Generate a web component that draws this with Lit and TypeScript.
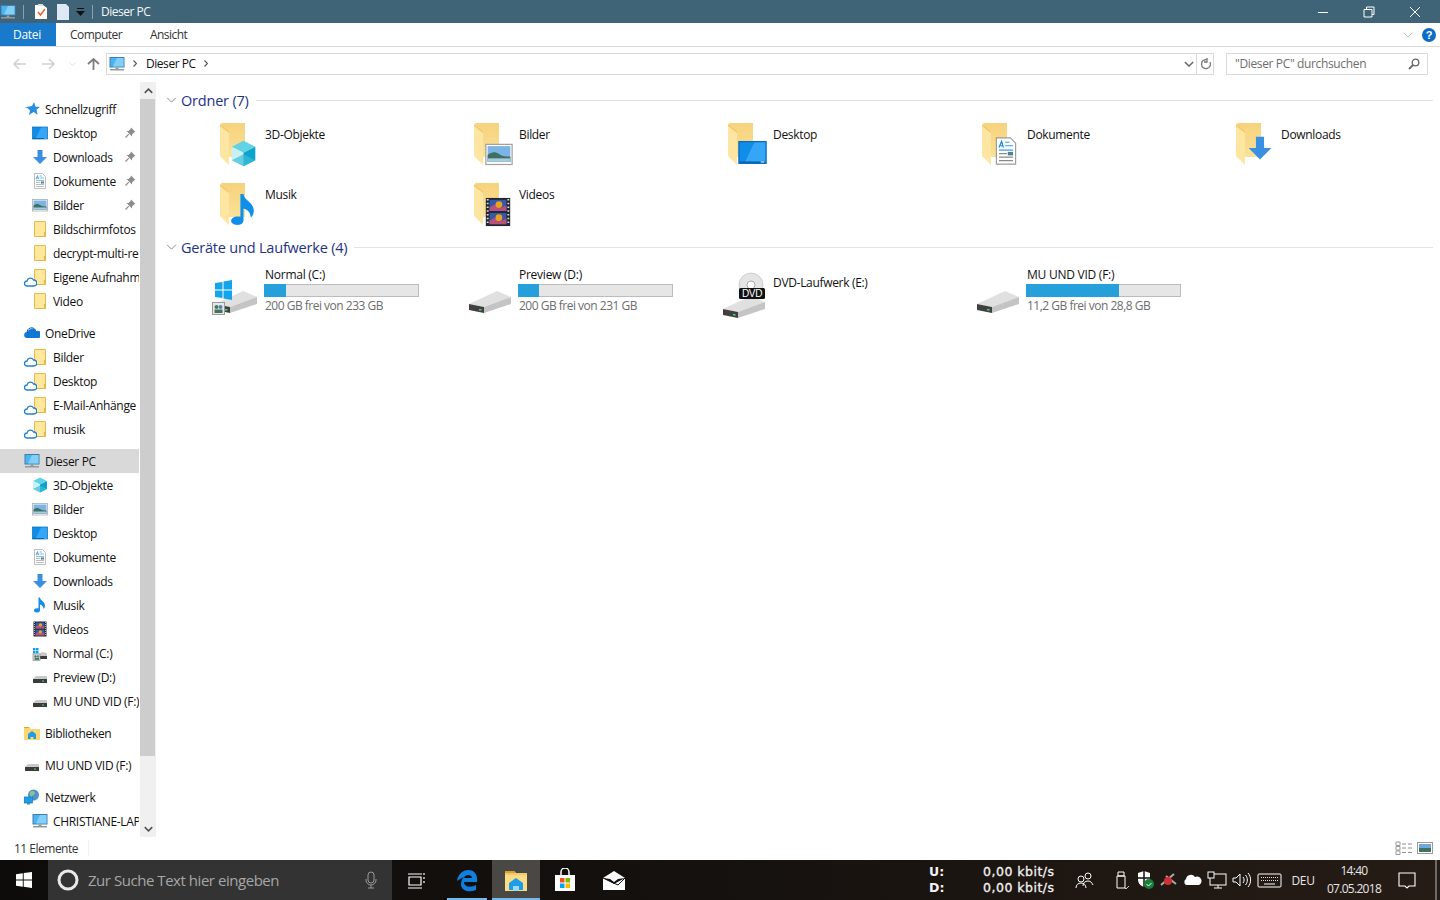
import { LitElement, html, css, svg } from "lit";
import { customElement } from "lit/decorators.js";

const frag: Record<string, any> = {
  cube: svg`<polygon points="16,1 30,8 16,15 2,8" fill="#62d3e6"/><polygon points="2,8 16,15 16,31 2,24" fill="#c9f1f5"/><polygon points="30,8 16,15 16,31 30,24" fill="#0ca3cd"/><polygon points="2,24 16,17 30,24 16,31" fill="#3bbcd8" opacity=".7"/>`,
  desktop: svg`<rect x="1" y="4" width="30" height="24" fill="#0f8de8" stroke="#0a6cbc" stroke-width="1.4"/><polygon points="18,5 30,5 30,26 8,26" fill="#34a6f5"/><rect x="2" y="26" width="28" height="1.4" fill="#0a5fa8"/><rect x="25" y="26" width="4" height="1" fill="#fff"/>`,
  arrow: svg`<path d="M11 2h10v14h9L16 30 2 16h9z" fill="#3b8fe2"/>`,
  doc: svg`<path d="M5 1h16l6 6v24H5z" fill="#fff" stroke="#9a9a9a" stroke-width="1.3"/><path d="M8 12l3-7 2 7M9 10h3" fill="none" stroke="#1789dc" stroke-width="1.4"/><path d="M15 6h5M15 10h9M8 15h16" stroke="#3b9fe0" stroke-width="1.3"/><path d="M8 19h9M8 23h16M8 27h16" stroke="#8a8a8a" stroke-width="1.2"/><rect x="18" y="17" width="6" height="4" fill="#4f7f92"/>`,
  picture: svg`<rect x="1" y="5" width="30" height="23" fill="#fff" stroke="#a0a0a0" stroke-width="1.4"/><rect x="3" y="7" width="26" height="18" fill="#7db4e6"/><path d="M3 17c5-4 9-4 13-1s8 3 13 3v6H3z" fill="#3f7064"/><rect x="3" y="21" width="26" height="4" fill="#a9cbe0"/>`,
  music: svg`<path d="M13 1h3c0 6 10 8 10 16 0 3-1 5-3 7 0-5-3-8-7-9v11c0 4-3 5-6 5-4 0-6-2-6-4 0-3 4-5 9-4z" fill="#0f8fea"/>`,
  film: svg`<rect x="3" y="1" width="26" height="30" fill="#20262e"/><rect x="7" y="3" width="18" height="12" fill="#3558a8"/><rect x="7" y="17" width="18" height="12" fill="#3558a8"/><path d="M7 11l6-3 5 4 7-3v6H7zM7 25l6-3 5 4 7-3v6H7z" fill="#b8527c"/><circle cx="17" cy="8" r="3.6" fill="#e8a21f"/><circle cx="17" cy="22" r="3.6" fill="#e8a21f"/><path d="M4 3h2M4 7h2M4 11h2M4 15h2M4 19h2M4 23h2M4 27h2M26 3h2M26 7h2M26 11h2M26 15h2M26 19h2M26 23h2M26 27h2" stroke="#ddd" stroke-width="1.5"/>`,
};

const ic = (f: any, vb = "0 0 32 32") => html`<svg class="ni" viewBox=${vb}>${f}</svg>`;
const sfolder = svg`<path d="M2.500 .5h11v15h-11z" fill="#ffe79d" stroke="#e5b94a"/><rect x="12" y="11" width="2" height="5" fill="#e5b94a"/>`;
const star = svg`<path d="M10 1l1.600 4.700 4.400.1-3.500 3 1.200 5L9.500 11 5 14l1-4.500-2.600-2.500h-3l3-1h-1l3.500-.6h-.5L8 5z" fill="#2a8ee0"/>`;
const monitor = svg`<rect x="1" y="1.500" width="14" height="9.500" fill="#4cb4f2" stroke="#3f7fa8"/><path d="M8 2h6.500v8.500H4z" fill="#82d0f8"/><rect x="6.500" y="11.500" width="3" height="1.500" fill="#9a9a9a"/><rect x="1" y="13" width="14" height="1.500" fill="#8f9aa2"/>`;
const sdrive = svg`<polygon points="1,10 4,7 15,7 15,10" fill="#c8c8c8"/><rect x="1" y="10" width="14" height="4" fill="#3c3c3c"/><rect x="10" y="11.500" width="2" height="1" fill="#4cd964"/>`;
const swin = svg`<path d="M1 3h2.500v2.500H1zM4 3h2.500v2.500H4zM1 6h2.500v2.500H1zM4 6h2.500v2.500H4z" fill="#13a0e8"/><polygon points="7,9 10,7 15,8 15,11 7,11" fill="#c8c8c8"/><rect x="8" y="11" width="7" height="3" fill="#3c3c3c"/><rect x="1" y="9" width="7" height="6.500" fill="#dfdfdf" stroke="#8c8c8c" stroke-width=".7"/><circle cx="3.500" cy="11.500" r="1.200" fill="#4a7a52"/><circle cx="6" cy="11.500" r="1.200" fill="#4a8ab0"/><rect x="2.500" y="13" width="4.500" height="1.800" fill="#45705a"/>`;
const lib = svg`<path d="M0 3h6l1 1h9v11H0z" fill="#fbd56f"/><path d="M0 2h5l1 1H0z" fill="#e0a92e"/><path d="M4 9l4-3 4 3v5H9.500v-2h-3v2H4z" fill="#1e9ce8"/>`;
const net = svg`<circle cx="9.500" cy="6" r="5.500" fill="#4c93c9"/><path d="M6 3c2-2 5-1 5 1s-3 2-3 4-3-2-2-5z" fill="#8fbf8c"/><rect x="0" y="8" width="8.500" height="6" fill="#18a0ee" stroke="#0f78b8" stroke-width=".7"/><rect x="3" y="14" width="3" height="1.500" fill="#777"/>`;
const odrive = svg`<path d="M3 13a3 3 0 0 1 .4-6 5 5 0 0 1 9-1 3.500 3.500 0 0 1 2.500 7z" fill="#0f78d4"/><path d="M3.500 8a4 4 0 0 1 8-2" fill="none" stroke="#0a5ca8" stroke-width="1"/>`;

const sm = (f: any, cls = "") => html`<svg class="ni ${cls}" viewBox="0 0 16 16">${f}</svg>`;

const nav = [
  [
    { t: "Schnellzugriff", top: 1, i: sm(star) },
    { t: "Desktop", i: ic(frag.desktop), pin: 1 },
    { t: "Downloads", i: ic(frag.arrow), pin: 1 },
    { t: "Dokumente", i: ic(frag.doc), pin: 1 },
    { t: "Bilder", i: ic(frag.picture), pin: 1 },
    { t: "Bildschirmfotos", i: sm(sfolder) },
    { t: "decrypt-multi-release", i: sm(sfolder) },
    { t: "Eigene Aufnahmen", i: sm(sfolder), cloud: 1 },
    { t: "Video", i: sm(sfolder) },
  ],
  [
    { t: "OneDrive", top: 1, i: sm(odrive) },
    { t: "Bilder", i: sm(sfolder), cloud: 1 },
    { t: "Desktop", i: sm(sfolder), cloud: 1 },
    { t: "E-Mail-Anhänge", i: sm(sfolder), cloud: 1 },
    { t: "musik", i: sm(sfolder), cloud: 1 },
  ],
  [
    { t: "Dieser PC", top: 1, sel: 1, i: sm(monitor) },
    { t: "3D-Objekte", i: ic(frag.cube) },
    { t: "Bilder", i: ic(frag.picture) },
    { t: "Desktop", i: ic(frag.desktop) },
    { t: "Dokumente", i: ic(frag.doc) },
    { t: "Downloads", i: ic(frag.arrow) },
    { t: "Musik", i: ic(frag.music) },
    { t: "Videos", i: ic(frag.film) },
    { t: "Normal (C:)", i: sm(swin) },
    { t: "Preview (D:)", i: sm(sdrive) },
    { t: "MU UND VID (F:)", i: sm(sdrive) },
  ],
  [{ t: "Bibliotheken", top: 1, i: sm(lib) }],
  [{ t: "MU UND VID (F:)", top: 1, i: sm(sdrive) }],
  [
    { t: "Netzwerk", top: 1, i: sm(net) },
    { t: "CHRISTIANE-LAPTOP", i: sm(monitor) },
  ],
];

const folders = [
  { t: "3D-Objekte", f: frag.cube, x: 18, y: 21, s: 27 },
  { t: "Bilder", f: frag.picture, x: 19, y: 21, s: 28 },
  { t: "Desktop", f: frag.desktop, x: 18, y: 19, s: 29 },
  { t: "Dokumente", f: frag.doc, x: 18, y: 18, s: 28 },
  { t: "Downloads", f: frag.arrow, x: 19, y: 16, s: 26 },
  { t: "Musik", f: frag.music, x: 15, y: 14, s: 33 },
  { t: "Videos", f: frag.film, x: 17, y: 18, s: 30 },
];

const bigFolder = (o: any) => html`<svg class="big" viewBox="0 0 48 48">
  <defs><linearGradient id="fb" x1="0" x2="0" y1="0" y2="1"><stop offset="0" stop-color="#f6d27c"/><stop offset="1" stop-color="#fbe198"/></linearGradient></defs>
  <polygon points="9,4 33,4 33,38 17,38" fill="url(#fb)"/>
  <polygon points="8,5 17,12 17,46 8,37" fill="#fde5a2"/>
  <polygon points="8,5 17,12 17,14 8,7" fill="#f3c868"/>
  <svg x=${o.x} y=${o.y} width=${o.s} height=${o.s} viewBox="0 0 32 32">${o.f}</svg>
</svg>`;

const driveBody = svg`
  <polygon points="3,34 31,21 45,27 18,37" fill="#e0e0e0"/>
  <polygon points="18,37 45,27 45,34 18,43" fill="#c4c4c4"/>
  <polygon points="3,34 18,37 18,43 3,40" fill="#404040"/>
  <rect x="13" y="39" width="2.500" height="1.500" fill="#4cd964"/>`;

const drives = [
  { t: "Normal (C:)", pct: 22 / 155, sub: "200 GB frei von 233 GB", win: 1 },
  { t: "Preview (D:)", pct: 21 / 155, sub: "200 GB frei von 231 GB" },
  { t: "DVD-Laufwerk (E:)", dvd: 1 },
  { t: "MU UND VID (F:)", pct: 94 / 155, sub: "11,2 GB frei von 28,8 GB" },
];

const driveIcon = (d: any) => {
  if (d.dvd)
    return html`<svg class="big" viewBox="0 0 48 48">
      <g transform="translate(0,5)">${driveBody}</g>
      <circle cx="31" cy="15" r="12" fill="#e4e4e4" stroke="#b8b8b8" stroke-width=".6"/>
      <circle cx="31" cy="15" r="4" fill="#fff" stroke="#aaa"/>
      <rect x="19" y="18" width="26" height="11" rx="1.500" fill="#111"/>
      <text x="32" y="27" text-anchor="middle" class="dvdt">DVD</text>
    </svg>`;
  return html`<svg class="big" viewBox="0 0 48 48">
    ${driveBody}
    ${d.win
      ? svg`<path d="M3 13l7.500-1v7.500H3zM11.500 11.500 20 10v9.500h-8.500zM3 20.500h7.500V28L3 27zM11.500 20.500H20V30l-8.500-1.500z" fill="#13a5ea"/>
        <rect x="0.500" y="32.500" width="12" height="12" fill="#e8e8e8" stroke="#9a9a9a"/>
        <circle cx="4.500" cy="37" r="2" fill="#4a7a52"/><circle cx="8.500" cy="37" r="2" fill="#4a8ab0"/><rect x="2.500" y="39.500" width="8" height="3.500" fill="#45705a"/>`
      : ""}
  </svg>`;
};

const chev = (cls: string) => html`<svg class=${cls} viewBox="0 0 12 7"><path d="M1 1l5 5 5-5" fill="none" stroke="currentColor" stroke-width="1"/></svg>`;

@customElement("app-root")
export class AppRoot extends LitElement {
  static styles = css`
    :host { display: flex; flex-direction: column; width: 1440px; height: 900px; overflow: hidden; background: #fff;
      font-family: "Open Sans", "Noto Sans", sans-serif; font-size: 12px; color: #111; letter-spacing: -0.32px; }
    svg { display: block; flex: none; }

    .title { height: 23px; background: #3f6478; display: flex; align-items: center; color: #fff; flex: none; }
    .t-pc { width: 16px; height: 16px; margin-right: 7px; }
    .t-sep { width: 1px; height: 14px; background: #8ba2ae; }
    .t-doc { width: 14px; height: 16px; margin-left: 10px; }
    .t-page { width: 14px; height: 16px; margin-left: 8px; }
    .t-drop { width: 9px; height: 8px; margin: 0 7px 0 6px; }
    .t-name { margin-left: 8px; color: #f4f7f8; letter-spacing: -0.5px; }
    .wins { margin-left: auto; margin-right: 2px; display: flex; }
    .wbtn { width: 46px; height: 21px; display: flex; align-items: center; justify-content: center; }
    .wbtn svg { width: 12px; height: 12px; }

    .tabs { height: 23px; border-bottom: 1px solid #dadbdc; display: flex; align-items: center; flex: none; color: #333; }
    .datei { width: 56px; height: 23px; background: #1979ca; color: #fff; display: flex; align-items: center; justify-content: center; padding-right: 2px; box-sizing: border-box; }
    .tab { margin-left: 14px; width: 66px; letter-spacing: -0.55px; }
    .tabs-r { margin-left: auto; display: flex; align-items: center; margin-right: 4px; }
    .rib-ch { width: 10px; height: 6px; color: #aaa; margin-right: 9px; }
    .help { width: 14px; height: 14px; border-radius: 50%; background: #0f6cc4; color: #fff; font: bold 11px "Liberation Sans", sans-serif; display: flex; align-items: center; justify-content: center; letter-spacing: 0; }

    .addr { height: 34px; display: flex; align-items: center; flex: none; position: relative; }
    .nb { width: 13px; height: 12px; color: #cfcfcf; }
    .nb.b { margin-left: 13px; }
    .nb.f { margin-left: 16px; }
    .nb-d { width: 7px; height: 4px; color: #c8c8c8; margin-left: 14px; }
    .nb.u { margin-left: 11px; color: #7d7d7d; }
    .abox { margin-left: 6px; width: 1108px; height: 22px; border: 1px solid #d9d9d9; box-sizing: border-box; display: flex; align-items: center; color: #111; white-space: nowrap; padding-bottom: 1px; }
    .a-pc { width: 16px; height: 16px; margin-left: 2px; }
    .a-sep { width: 4px; height: 7px; color: #555; margin-left: 8px; }
    .a-name { margin-left: 9px; width: 50px; letter-spacing: -0.45px; }
    .a-chev { width: 10px; height: 6px; color: #666; margin-left: auto; margin-right: 2px; }
    .a-div { width: 1px; height: 20px; background: #d9d9d9; margin: 1px 3px 0 0; }
    .a-ref { width: 12px; height: 12px; color: #777; margin-right: 1px; }
    .sbox { margin-left: 12px; width: 202px; height: 22px; border: 1px solid #d9d9d9; box-sizing: border-box; display: flex; align-items: center; padding: 0 7px 1px 8px; color: #6d6d6d; letter-spacing: -0.36px; white-space: nowrap; }
    .sbox svg { width: 12px; height: 12px; margin-left: auto; color: #666; }

    .body { flex: 1; display: flex; min-height: 0; }
    .nav { width: 139px; margin-right: 1px; flex: none; overflow: hidden; padding-top: 16px; box-sizing: border-box; white-space: nowrap; }
    .grp { margin-bottom: 8px; }
    .row { height: 24px; display: flex; align-items: center; padding-left: 32px; position: relative; gap: 5px; }
    .row.top { padding-left: 24px; }
    .row.sel { background: #d9d9d9; }
    .ni { width: 16px; height: 16px; }
    .pin { position: absolute; left: 125px; top: 6px; width: 11px; height: 11px; }
    .cloud { position: absolute; left: 24px; top: 12px; width: 13px; height: 10px; }
    .sb { width: 16px; flex: none; background: #f0f0f0; display: flex; flex-direction: column; margin: 1px 1px 1px 0; }
    .sb-btn { height: 17px; display: flex; align-items: center; justify-content: center; color: #505050; flex: none; }
    .sb-btn svg { width: 9px; height: 6px; }
    .sb-th { height: 657px; background: #cdcdcd; width: 15px; flex: none; }
    .sb-sp { flex: 1; }

    .content { flex: 1; padding: 9px 7px 0 9px; min-width: 0; }
    .gh { height: 20px; display: flex; align-items: center; color: #1e3287; font-size: 14.500px; letter-spacing: -0.2px; }
    .gh .gc { width: 11px; height: 6px; color: #777; margin-right: 4px; }
    .gh i { flex: 1; height: 1px; background: #e3e3e3; margin-left: 7px; }
    .tiles { display: grid; grid-template-columns: repeat(5, 254px); padding-left: 46px; }
    .tiles.f { grid-auto-rows: 60px; padding-top: 5px; padding-bottom: 2px; }
    .tile { display: flex; align-items: flex-start; }
    .big { width: 48px; height: 48px; }
    .tiles.f .big { margin-top: 4px; }
    .tiles.f .name { margin: 12px 0 0 5px; line-height: 16px; }
    .tiles.d { padding-top: 10px; }
    .tiles.d .big { margin-top: 3px; }
    .dinfo { margin-left: 4px; width: 155px; }
    .dinfo .n { line-height: 16px; padding-left: 1px; letter-spacing: -0.25px; }
    .bar { height: 13px; box-sizing: border-box; border: 1px solid #bcbcbc; background: #e6e6e6; margin-top: 1px; }
    .bar div { background: #26a0da; margin: -1px 0 0 -1px; height: 13px; }
    .dinfo .s { line-height: 16px; color: #6d6d6d; padding-left: 1px; margin-top: 1px; letter-spacing: -0.5px; }
    .dvdn { margin: 8px 0 0 5px; line-height: 16px; }
    .dvdt { font: 10px "Liberation Sans", sans-serif; fill: #fff; }

    .status { height: 22px; flex: none; display: flex; align-items: center; padding: 0 0 2px 14px; box-sizing: border-box; color: #333; letter-spacing: -0.5px; }
    .st-sep { width: 1px; height: 16px; background: #f0f0f0; margin-left: 10px; }
    .st-r { margin-left: auto; display: flex; gap: 5px; margin-right: 6px; align-items: center; }
    .st-r svg { width: 17px; height: 14px; }

    .task { height: 40px; flex: none; display: flex; align-items: stretch; background: linear-gradient(90deg, #0d0c0a, #15110e 50%, #261c16); color: #fff; letter-spacing: 0; }
    .tb { width: 48px; display: flex; align-items: center; justify-content: center; flex: none; position: relative; }
    .tb svg { width: 24px; height: 24px; }
    .tb.start svg { width: 16px; height: 16px; }
    .tb.view svg { margin-right: 2px; }
    .tsearch { width: 344px; background: #333333; display: flex; align-items: center; flex: none; color: #a6a6a6; font-size: 15px; letter-spacing: -0.46px; }
    .tsearch .cort { width: 22px; height: 22px; margin: 0 9px; }
    .tsearch .mic { width: 14px; height: 18px; margin-left: auto; margin-right: 14px; }
    .g3 { width: 3px; flex: none; }
    .g1 { width: 1px; flex: none; }
    .tb.edge::after { content: ""; position: absolute; left: 4px; right: 4px; bottom: 0; height: 2px; background: #76b9ed; }
    .tb.on { background: #4a4844; }
    .tb.on::after { content: ""; position: absolute; left: 0; right: 0; bottom: 0; height: 2px; background: #76b9ed; }
    .net { margin-left: auto; display: grid; grid-template-columns: 54px 89px; font: bold 12.500px/16px "DejaVu Sans", sans-serif; align-content: center; color: #f2f2f2; }
    .net span { font-weight: normal; -webkit-text-stroke: 0.3px #f2f2f2; letter-spacing: 0.5px; }
    .tray { display: flex; align-items: center; }
    .tgap { width: 10px; flex: none; }
    .ti { flex: none; display: flex; justify-content: center; align-items: center; }
    .deu { width: 34px; text-align: center; color: #e6e6e6; font-size: 12px; letter-spacing: -0.3px; }
    .clock { width: 68px; text-align: center; line-height: 18px; color: #e6e6e6; letter-spacing: -0.7px; font-size: 12px; padding-bottom: 1px; }
    .sd { width: 2px; margin: 0 3px 0 9px; background: #6a6a6a; flex: none; height: 40px; }
  `;

  private tray(w: number, body: any, h = 20, vw = 20) {
    return html`<div class="ti" style="width:${w}px"><svg width=${vw} height=${h} viewBox="0 0 ${vw} ${h}">${body}</svg></div>`;
  }

  render() {
    const pin = svg`<polygon points="6,.5 10.500,5 9,5.500 7,7.500 7,9.500 1.500,4 3.500,4 5.500,2" fill="#8c8c8c"/><path d="M3.800 7.200L.5 10.500" stroke="#8c8c8c" stroke-width="1.200"/>`;
    return html`
      <div class="title">
        <svg class="t-pc" viewBox="0 0 16 16">${monitor}</svg>
        <div class="t-sep"></div>
        <svg class="t-doc" viewBox="0 0 14 16"><path d="M1 1h8l4 3v11H1z" fill="#fff"/><path d="M4 8l2.500 3L11 5" fill="none" stroke="#e8622a" stroke-width="1.500"/><rect x="4" y="0" width="5" height="2" fill="#ddd"/></svg>
        <svg class="t-page" viewBox="0 0 14 16"><path d="M1 0h9l3 3v13H1z" fill="#dfe8f5"/></svg>
        <svg class="t-drop" viewBox="0 0 9 8"><rect x="1" y="0" width="7" height="1" fill="#111"/><path d="M0 3h9L4.500 8z" fill="#111"/></svg>
        <div class="t-sep"></div>
        <div class="t-name">Dieser PC</div>
        <div class="wins">
          <div class="wbtn"><svg viewBox="0 0 12 12"><path d="M1 6.500h10" stroke="#fff"/></svg></div>
          <div class="wbtn"><svg viewBox="0 0 12 12"><path d="M3.500 3V1h7.500v7.500H9M1 3.500h8v7.500H1z" fill="none" stroke="#fff"/></svg></div>
          <div class="wbtn"><svg viewBox="0 0 12 12"><path d="M1 1l10 10M11 1L1 11" stroke="#fff"/></svg></div>
        </div>
      </div>
      <div class="tabs">
        <div class="datei">Datei</div>
        <div class="tab">Computer</div>
        <div class="tab">Ansicht</div>
        <div class="tabs-r">${chev("rib-ch")}<div class="help">?</div></div>
      </div>
      <div class="addr">
        <svg class="nb b" viewBox="0 0 13 12"><path d="M6 1L1 6l5 5M1 6h12" fill="none" stroke="currentColor" stroke-width="1.500"/></svg>
        <svg class="nb f" viewBox="0 0 13 12"><path d="M7 1l5 5-5 5M12 6H0" fill="none" stroke="currentColor" stroke-width="1.500"/></svg>
        ${chev("nb-d")}
        <svg class="nb u" viewBox="0 0 13 12"><path d="M1 6l5.500-5L12 6M6.500 1v11" fill="none" stroke="currentColor" stroke-width="1.800"/></svg>
        <div class="abox">
          <svg class="a-pc" viewBox="0 0 16 16">${monitor}</svg>
          <svg class="a-sep" viewBox="0 0 4 7"><path d="M.5.500l3 3-3 3" fill="none" stroke="currentColor" stroke-width="1.200"/></svg>
          <div class="a-name">Dieser PC</div>
          <svg class="a-sep" viewBox="0 0 4 7"><path d="M.5.500l3 3-3 3" fill="none" stroke="currentColor" stroke-width="1.200"/></svg>
          <svg class="a-chev" viewBox="0 0 12 7"><path d="M1 1l5 5 5-5" fill="none" stroke="currentColor" stroke-width="1.700"/></svg>
          <div class="a-div"></div>
          <svg class="a-ref" viewBox="0 0 12 12"><path d="M10 4a4.500 4.500 0 1 1-3-2.300M7 0v4h-3" fill="none" stroke="currentColor" stroke-width="1.300"/></svg>
        </div>
        <div class="sbox">"Dieser PC" durchsuchen
          <svg viewBox="0 0 12 12"><circle cx="7.500" cy="4.500" r="3.300" fill="none" stroke="currentColor" stroke-width="1.300"/><path d="M5 7l-4 4" stroke="currentColor" stroke-width="1.800"/></svg>
        </div>
      </div>

      <div class="body">
        <div class="nav">
          ${nav.map(g => html`<div class="grp">
            ${g.map((r: any) => html`<div class="row ${r.top ? "top" : ""} ${r.sel ? "sel" : ""}">
              ${r.i}<span>${r.t}</span>
              ${r.pin ? html`<svg class="pin" viewBox="0 0 11 11">${pin}</svg>` : ""}
              ${r.cloud ? html`<svg class="cloud" viewBox="0 0 13 10"><path d="M3 9a2.500 2.500 0 0 1 0-5 3.500 3.500 0 0 1 6.500-1A3 3 0 0 1 10 9z" fill="#fff" stroke="#1f7fd6" stroke-width="1.300"/></svg>` : ""}
            </div>`)}
          </div>`)}
        </div>
        <div class="sb">
          <div class="sb-btn"><svg viewBox="0 0 12 7"><path d="M1 6l5-5 5 5" fill="none" stroke="currentColor" stroke-width="2"/></svg></div>
          <div class="sb-th"></div>
          <div class="sb-sp"></div>
          <div class="sb-btn"><svg viewBox="0 0 12 7"><path d="M1 1l5 5 5-5" fill="none" stroke="currentColor" stroke-width="2"/></svg></div>
        </div>
        <div class="content">
          <div class="gh">${chev("gc")}<span>Ordner (7)</span><i></i></div>
          <div class="tiles f">
            ${folders.map(o => html`<div class="tile">${bigFolder(o)}<div class="name">${o.t}</div></div>`)}
          </div>
          <div class="gh">${chev("gc")}<span>Geräte und Laufwerke (4)</span><i></i></div>
          <div class="tiles d">
            ${drives.map((d: any) => html`<div class="tile">${driveIcon(d)}
              ${d.dvd
                ? html`<div class="dvdn">${d.t}</div>`
                : html`<div class="dinfo"><div class="n">${d.t}</div>
                    <div class="bar"><div style="width:${(d.pct * 100).toFixed(1)}%"></div></div>
                    <div class="s">${d.sub}</div></div>`}
            </div>`)}
          </div>
        </div>
      </div>

      <div class="status">
        <span>11 Elemente</span><div class="st-sep"></div>
        <div class="st-r">
          <svg viewBox="0 0 17 14"><path d="M1 1h4v3.500H1zM1 5.500h4V9H1zM1 10h4v3.500H1z" fill="none" stroke="#9a9a9a"/><path d="M7 3h4M13 3h4M7 7h4M13 7h4M7 11.500h4M13 11.500h4" stroke="#8f8f8f"/></svg>
          <svg viewBox="0 0 17 14"><rect x=".5" y="1.500" width="15" height="11" fill="#fff" stroke="#9a9a9a"/><rect x="2" y="3" width="12" height="8" fill="#6fa8dc"/><rect x="2" y="7" width="12" height="4" fill="#41705f"/></svg>
        </div>
      </div>

      <div class="task">
        <div class="tb start"><svg viewBox="0 0 16 16"><path d="M0 2.300l6.800-1v6.200H0zM7.700 1.100 16 0v7.500H7.700zM0 8.500h6.800v6.200l-6.800-1zM7.700 8.500H16V16l-8.300-1.200z" fill="#fff"/></svg></div>
        <div class="tsearch">
          <svg class="cort" viewBox="0 0 22 22"><circle cx="11" cy="11" r="9" fill="none" stroke="#e8e8e8" stroke-width="3"/></svg>
          <span>Zur Suche Text hier eingeben</span>
          <svg class="mic" viewBox="0 0 14 18"><rect x="4" y="1" width="6" height="11" rx="3" fill="none" stroke="#9a9a9a"/><path d="M2 8v1a5 5 0 0 0 10 0V8M7 14v3M4 17h6" fill="none" stroke="#9a9a9a"/></svg>
        </div>
        <div class="tb view"><svg viewBox="0 0 24 24"><path d="M5 6h14M5 20h14M6 9h12v8H6z" fill="none" stroke="#fff" stroke-width="1.200"/><path d="M21 5v2M21 9v2M21 13v2" stroke="#fff" stroke-width="1.200"/></svg></div>
        <div class="g3"></div>
        <div class="tb edge"><svg viewBox="0 0 24 24"><path d="M2 13C3 6 8 2 13 2c6 0 10 4 9 12H9c0 5 7 6 12 3v5c-7 3-15 1-15-6 0-3 1-5 3-7-3 1-5 3-7 4zM9 10h8c0-4-7-4-8 0z" fill="#0f7fe0"/></svg></div>
        <div class="g1"></div>
        <div class="tb on"><svg viewBox="0 0 24 24"><path d="M1 3h9l2 2h11v18H1z" fill="#fbdc85"/><path d="M1 3h9l2 2H1z" fill="#d8a22c"/><path d="M1 6h22" stroke="#e8b84a"/><path d="M5 22v-7l7-5 7 5v7h-4v-4H9v4z" fill="#1e9ce8"/><path d="M9 18h6v5H9z" fill="#9adcf5"/></svg></div>
        <div class="g1"></div>
        <div class="tb"><svg viewBox="0 0 24 24"><path d="M2 7h20v16H2z" fill="#fff"/><path d="M8 7V4a4 4 0 0 1 8 0v3" fill="none" stroke="#fff" stroke-width="1.500"/><rect x="7" y="10" width="4.500" height="4.500" fill="#f25022"/><rect x="12.500" y="10" width="4.500" height="4.500" fill="#7fba00"/><rect x="7" y="15.500" width="4.500" height="4.500" fill="#00a4ef"/><rect x="12.500" y="15.500" width="4.500" height="4.500" fill="#ffb900"/></svg></div>
        <div class="g1"></div>
        <div class="tb"><svg viewBox="0 0 24 24"><path d="M1 10L12 3l11 7v12H1z" fill="#fff"/><path d="M1 10l11 6 11-6-7 1-4 3-4-3z" fill="#111"/><path d="M1 10l15 7 7-7" fill="none" stroke="#111"/></svg></div>

        <div class="net">
          <div>U:</div><span>0,00 kbit/s</span>
          <div>D:</div><span>0,00 kbit/s</span>
        </div>
        <div class="tray">
          ${this.tray(26, svg`<circle cx="13" cy="6" r="3" fill="none" stroke="#fff"/><path d="M8 16c0-3 2-5 5-5s4 2 5 4" fill="none" stroke="#fff"/><circle cx="6" cy="9" r="3" fill="none" stroke="#fff"/><path d="M1 18c0-3 2-5 5-5s5 2 5 5" fill="none" stroke="#fff"/>`)}
          <div class="tgap"></div>
          ${this.tray(26, svg`<path d="M6 6h8v12H6zM7 2h6v4H7z" fill="none" stroke="#fff"/><path d="M13 17l2 2 3-3" fill="none" stroke="#ccc"/>`)}
          ${this.tray(22, svg`<path d="M3 3l6-2 6 2v6c0 5-3 7-6 8-3-1-6-3-6-8z" fill="#fff"/><path d="M9 1v16M3 8h12" stroke="#15110e" stroke-width="1.500"/><circle cx="14" cy="14" r="5" fill="#188038"/><path d="M11.500 14l2 2 3-3" fill="none" stroke="#fff"/>`)}
          ${this.tray(24, svg`<path d="M3 15L16 4M8 6l10 8" stroke="#aaa" stroke-width="2"/><circle cx="10" cy="11" r="4" fill="#d03030"/>`)}
          ${this.tray(24, svg`<path d="M4 15a3.500 3.500 0 0 1 0-6 5 5 0 0 1 9-2 4 4 0 0 1 4 8z" fill="#fff"/>`)}
          ${this.tray(25, svg`<rect x="3" y="4" width="16" height="11" fill="none" stroke="#fff"/><rect x="1" y="2" width="6" height="6" fill="#15110e" stroke="#fff"/><path d="M11 15v3M7 18h8" stroke="#fff"/>`)}
          ${this.tray(23, svg`<path d="M2 8h3l4-4v12l-4-4H2z" fill="none" stroke="#fff"/><path d="M12 7c1.500 2 1.500 4 0 6M14.500 5c2.500 3 2.500 7 0 10M17 3c3.500 4 3.500 10 0 14" fill="none" stroke="#fff"/>`)}
          ${this.tray(34, svg`<rect x="1" y="2" width="23" height="13" rx="1" fill="none" stroke="#fff"/><path d="M4 5.500h17M4 8.500h17" stroke="#ddd" stroke-dasharray="1 1"/><path d="M7 12h11" stroke="#fff"/>`, 17, 25)}
          <div class="deu">DEU</div>
          <div class="clock"><div>14:40</div><div>07.05.2018</div></div>
          ${this.tray(38, svg`<path d="M2 3h16v13h-6l-2 2-2-2H2z" fill="none" stroke="#fff" stroke-width="1.100"/>`)}
          <div class="sd"></div>
        </div>
      </div>
    `;
  }
}
